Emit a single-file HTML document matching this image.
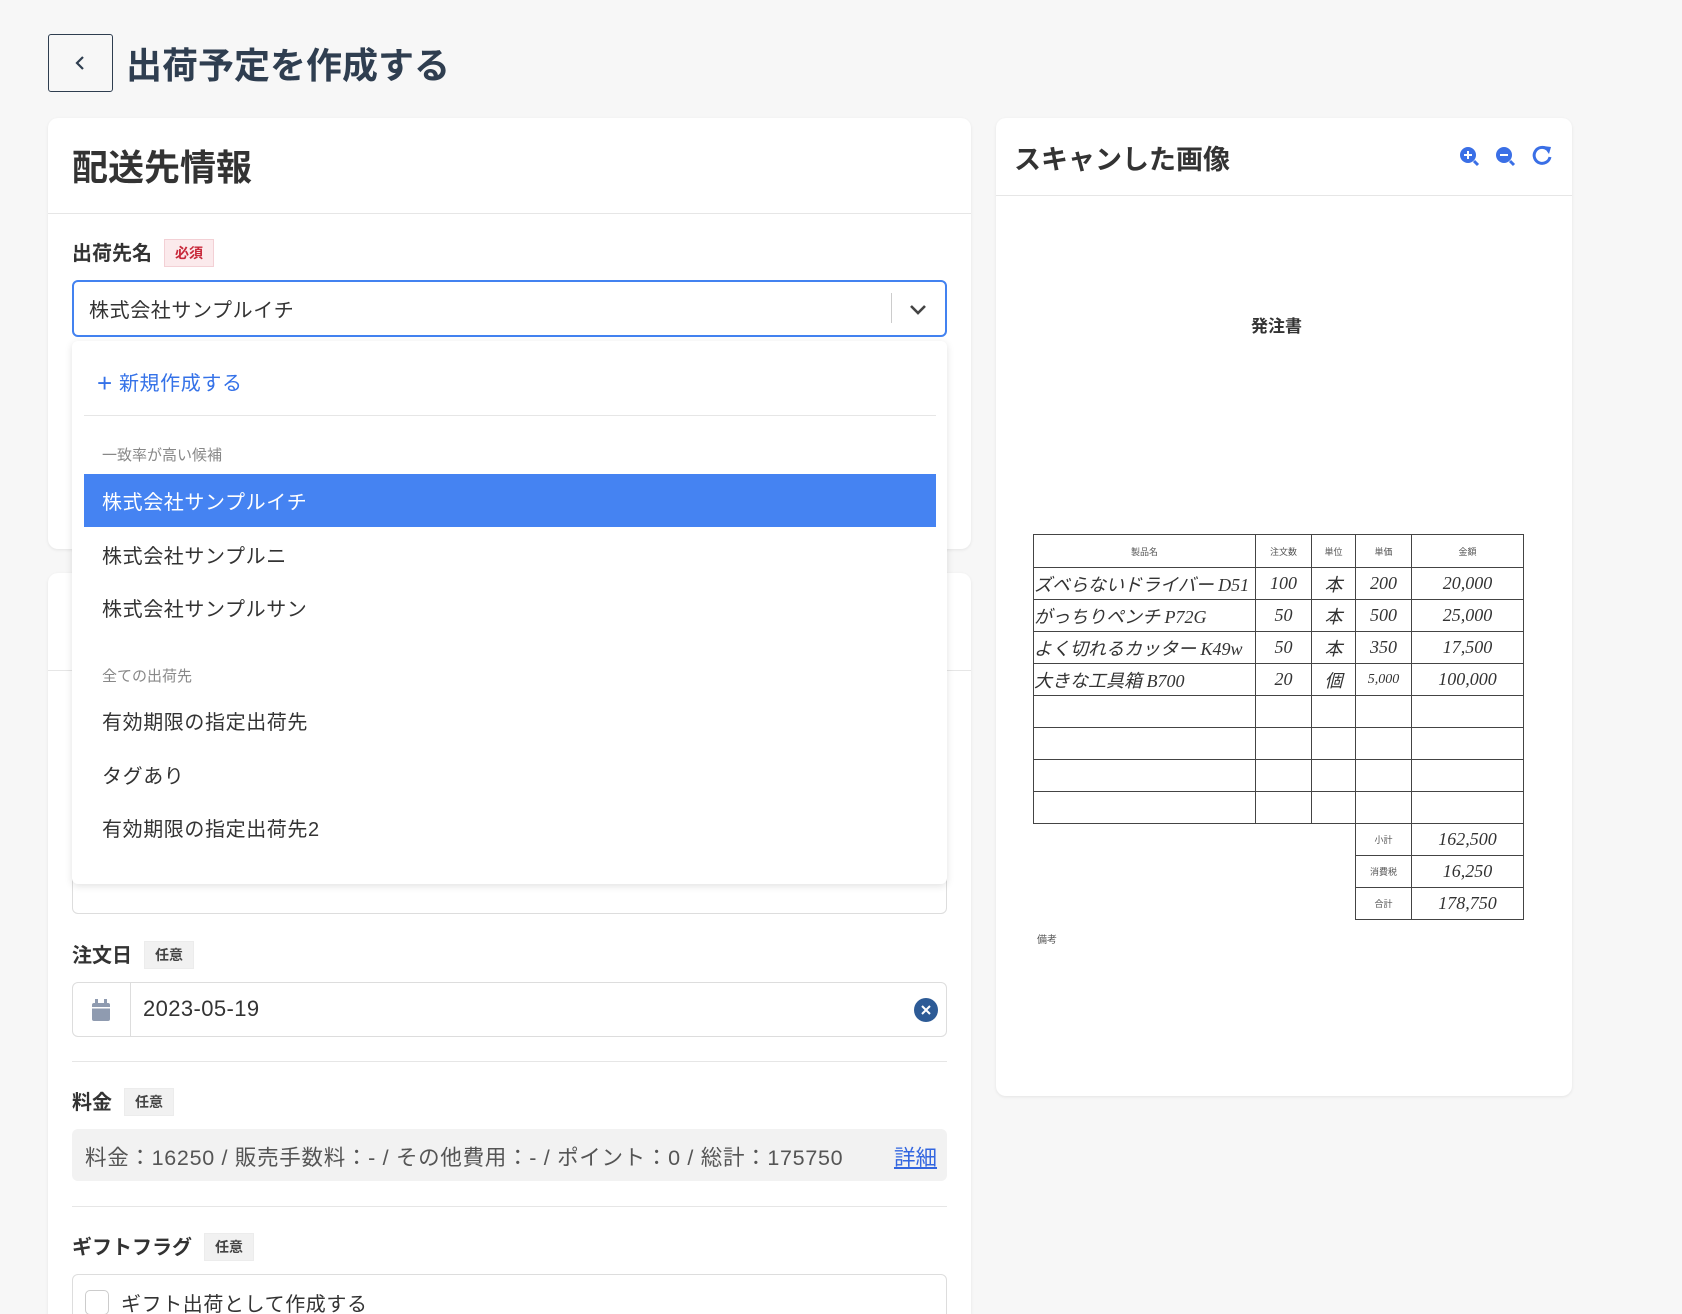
<!DOCTYPE html>
<html style="width:1682px;height:1314px;overflow:hidden"><head><meta charset="utf-8"><style>
*{box-sizing:border-box;margin:0;padding:0}
body{width:1682px;height:1314px;overflow:hidden;background:#f7f7f7;font-family:"Liberation Sans","Noto Sans CJK JP",sans-serif;color:#333;position:relative}
.a{position:absolute}
.card{background:#fff;border-radius:10px;box-shadow:0 1px 3px rgba(0,0,0,.08)}
.lbl{font-size:20px;font-weight:bold;color:#333}
.tag{display:inline-block;font-size:14px;font-weight:bold;padding:3px 10px;margin-left:12px;vertical-align:2px;background:#f1f1f1;color:#444;border:1px solid #ececec}
.req{background:#fbeaec;color:#c8283a;border-color:#f3d0d5}
.hr{height:1px;background:#e6e6e6}
.item{font-size:20px;color:#333;letter-spacing:0.6px}
.cap{font-size:15px;color:#888}
table{border-collapse:collapse}
td{border:1.6px solid #444;font-size:9px;text-align:center;color:#555}
.hw{font-family:"Liberation Serif","Noto Sans CJK JP",serif;font-style:italic;font-size:18px;color:#333}
</style></head><body>
<div class="a" style="left:48px;top:34px;width:65px;height:58px;border:1px solid #2f3e50;border-radius:3px;"><svg width="65" height="58" style="position:absolute;left:-1px;top:-1px"><path d="M35 23 L29 29 L35 35" stroke="#2f3e50" stroke-width="2.2" fill="none"/></svg></div>
<div class="a" style="left:126px;top:37px;font-size:36px;font-weight:bold;color:#2f3e50">出荷予定を作成する</div>

<div class="a card" style="left:48px;top:118px;width:923px;height:431px"></div>
<div class="a" style="left:72px;top:139px;font-size:36px;font-weight:bold;color:#333">配送先情報</div>
<div class="a hr" style="left:48px;top:213px;width:923px"></div>
<div class="a lbl" style="left:72px;top:237px">出荷先名<span class="tag req">必須</span></div>
<div class="a card" style="left:48px;top:573px;width:923px;height:741px;border-radius:10px 10px 0 0"></div>
<div class="a hr" style="left:48px;top:670px;width:923px"></div>
<div class="a" style="left:72px;top:860px;width:875px;height:54px;border:1px solid #ddd;border-radius:6px"></div>

<div class="a" style="left:72px;top:280px;width:875px;height:57px;border:2px solid #4382f0;border-radius:6px;background:#fff"></div>
<div class="a item" style="left:89px;top:294px">株式会社サンプルイチ</div>
<div class="a" style="left:891px;top:293px;width:1px;height:30px;background:#ccc"></div>
<svg class="a" style="left:906px;top:299px" width="24" height="20"><path d="M5 7 L12 14 L19 7" stroke="#444" stroke-width="2.6" fill="none"/></svg>

<div class="a" style="left:72px;top:341px;width:875px;height:543px;background:#fff;border-radius:6px;box-shadow:0 2px 8px rgba(0,0,0,.12)"></div>
<div class="a" style="left:97px;top:367px;font-size:20px;color:#3572e8;letter-spacing:0.6px"><span style="font-size:26px;line-height:20px;vertical-align:-2px">+</span> 新規作成する</div>
<div class="a hr" style="left:84px;top:415px;width:852px"></div>
<div class="a cap" style="left:102px;top:444px">一致率が高い候補</div>
<div class="a" style="left:84px;top:474px;width:852px;height:53px;background:#4583f2"></div>
<div class="a item" style="left:102px;top:486px;color:#fff">株式会社サンプルイチ</div>
<div class="a item" style="left:102px;top:540px">株式会社サンプルニ</div>
<div class="a item" style="left:102px;top:593px">株式会社サンプルサン</div>
<div class="a cap" style="left:102px;top:665px">全ての出荷先</div>
<div class="a item" style="left:102px;top:706px">有効期限の指定出荷先</div>
<div class="a item" style="left:102px;top:760px">タグあり</div>
<div class="a item" style="left:102px;top:813px">有効期限の指定出荷先2</div>

<div class="a lbl" style="left:72px;top:939px">注文日<span class="tag">任意</span></div>
<div class="a" style="left:72px;top:982px;width:875px;height:55px;border:1px solid #ddd;border-radius:6px"></div>
<div class="a" style="left:130px;top:982px;width:1px;height:55px;background:#ddd"></div>
<svg class="a" style="left:90px;top:998px" width="22" height="24"><rect x="2" y="5" width="18" height="18" rx="2" fill="#8f9bb0"/><rect x="5" y="1" width="3" height="6" fill="#8f9bb0"/><rect x="14" y="1" width="3" height="6" fill="#8f9bb0"/><rect x="2" y="9" width="18" height="1.5" fill="#fff"/></svg>
<div class="a" style="left:143px;top:996px;font-size:22px;color:#333;letter-spacing:0.4px">2023-05-19</div>
<svg class="a" style="left:914px;top:998px" width="24" height="24"><circle cx="12" cy="12" r="12" fill="#2d5b96"/><path d="M8 8 L16 16 M16 8 L8 16" stroke="#fff" stroke-width="2"/></svg>
<div class="a hr" style="left:72px;top:1061px;width:875px"></div>

<div class="a lbl" style="left:72px;top:1086px">料金<span class="tag">任意</span></div>
<div class="a" style="left:72px;top:1129px;width:875px;height:52px;background:#f2f2f2;border-radius:6px"></div>
<div class="a" style="left:85px;top:1141px;font-size:21.5px;color:#555;letter-spacing:0.7px">料金：16250 / 販売手数料：- / その他費用：- / ポイント：0 / 総計：175750</div>
<div class="a" style="left:894px;top:1141px;font-size:21.5px;color:#3366e0;text-decoration:underline">詳細</div>
<div class="a hr" style="left:72px;top:1206px;width:875px"></div>

<div class="a lbl" style="left:72px;top:1231px">ギフトフラグ<span class="tag">任意</span></div>
<div class="a" style="left:72px;top:1274px;width:875px;height:60px;border:1px solid #ddd;border-radius:6px"></div>
<div class="a" style="left:85px;top:1290px;width:24px;height:25px;border:1px solid #ccc;border-radius:5px"></div>
<div class="a item" style="left:121px;top:1288px">ギフト出荷として作成する</div>

<div class="a card" style="left:996px;top:118px;width:576px;height:978px"></div>
<div class="a" style="left:1014px;top:138px;font-size:27px;font-weight:bold;color:#333">スキャンした画像</div>
<div class="a hr" style="left:996px;top:195px;width:576px"></div>
<svg class="a" style="left:1458px;top:144px" width="100" height="24">
<circle cx="10" cy="11" r="8" fill="#3a6fe6"/><path d="M6 11h8M10 7v8" stroke="#fff" stroke-width="2"/><path d="M16 17l4 4" stroke="#3a6fe6" stroke-width="3"/>
<circle cx="46" cy="11" r="8" fill="#3a6fe6"/><path d="M42 11h8" stroke="#fff" stroke-width="2"/><path d="M52 17l4 4" stroke="#3a6fe6" stroke-width="3"/>
<path d="M92 13 A8 8 0 1 1 89 5" stroke="#3a6fe6" stroke-width="3" fill="none"/><path d="M85 2 L93 3 L91 10 Z" fill="#3a6fe6"/>
</svg>
<div class="a" style="left:1251px;top:312px;font-size:17px;font-weight:bold;color:#333">発注書</div>
<table class="a" style="left:1033px;top:534px;width:491px">
<tr style="height:33px"><td style="width:222px">製品名</td><td style="width:56px">注文数</td><td style="width:44px">単位</td><td style="width:56px">単価</td><td>金額</td></tr>
<tr style="height:32px"><td class="hw" style="text-align:left">ズベらないドライバー D51</td><td class="hw">100</td><td class="hw">本</td><td class="hw">200</td><td class="hw">20,000</td></tr>
<tr style="height:32px"><td class="hw" style="text-align:left">がっちりペンチ P72G</td><td class="hw">50</td><td class="hw">本</td><td class="hw">500</td><td class="hw">25,000</td></tr>
<tr style="height:32px"><td class="hw" style="text-align:left">よく切れるカッター K49w</td><td class="hw">50</td><td class="hw">本</td><td class="hw">350</td><td class="hw">17,500</td></tr>
<tr style="height:32px"><td class="hw" style="text-align:left">大きな工具箱 B700</td><td class="hw">20</td><td class="hw">個</td><td class="hw" style="font-size:14px">5,000</td><td class="hw">100,000</td></tr>
<tr style="height:32px"><td></td><td></td><td></td><td></td><td></td></tr>
<tr style="height:32px"><td></td><td></td><td></td><td></td><td></td></tr>
<tr style="height:32px"><td></td><td></td><td></td><td></td><td></td></tr>
<tr style="height:32px"><td></td><td></td><td></td><td></td><td></td></tr>
<tr style="height:32px"><td style="border:none;border-top:1.6px solid #444"></td><td style="border:none;border-top:1.6px solid #444"></td><td style="border:none;border-top:1.6px solid #444;border-right:1.6px solid #444"></td><td>小計</td><td class="hw">162,500</td></tr>
<tr style="height:32px"><td style="border:none"></td><td style="border:none"></td><td style="border:none;border-right:1.6px solid #444"></td><td>消費税</td><td class="hw">16,250</td></tr>
<tr style="height:32px"><td style="border:none"></td><td style="border:none"></td><td style="border:none;border-right:1.6px solid #444"></td><td>合計</td><td class="hw">178,750</td></tr>
</table>
<div class="a" style="left:1037px;top:931px;font-size:10px;color:#555">備考</div>
</body></html>
